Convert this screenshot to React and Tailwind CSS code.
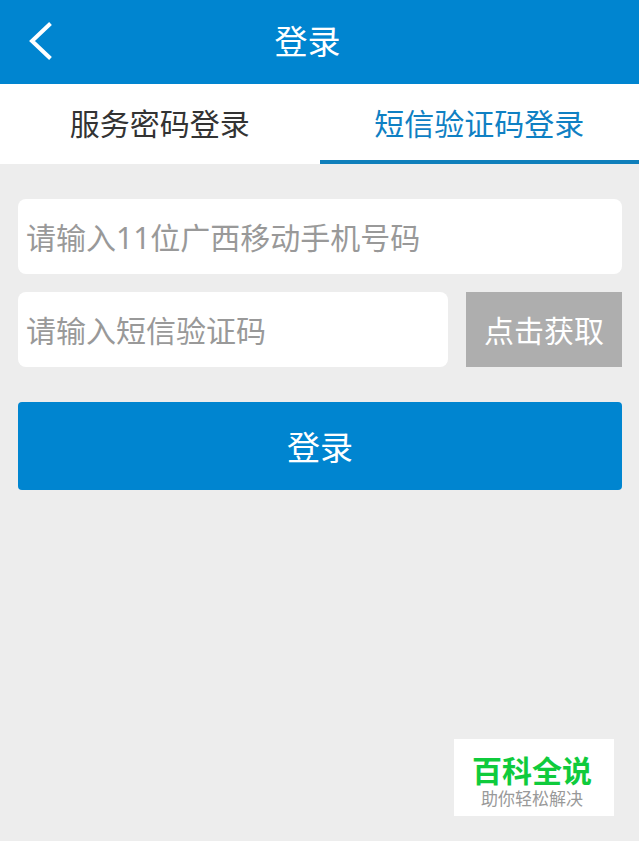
import { useState } from "react";

const TABS = [
  { id: "password", label: "服务密码登录" },
  { id: "sms", label: "短信验证码登录" },
];

const Header = () => (
  <header className="grid h-[84px] grid-cols-[1fr_auto_1fr] items-center bg-[#0085d0] pb-0.5 pr-6 text-white">
    <button type="button" aria-label="返回" className="justify-self-start py-5 pl-7 pr-6">
      <svg width="26" height="42" viewBox="0 0 26 42" fill="none" stroke="currentColor" strokeWidth="4">
        <path d="M22.5 3.5 4 21 22.5 38.5" />
      </svg>
    </button>
    <h1 className="pt-0.5 text-[33px] leading-10">登录</h1>
  </header>
);

const Tabs = ({ active, onChange }) => (
  <nav role="tablist" className="grid h-20 grid-cols-2 bg-white">
    {TABS.map((tab) => (
      <button
        key={tab.id}
        type="button"
        role="tab"
        aria-selected={active === tab.id}
        onClick={() => onChange(tab.id)}
        className={`border-b-4 pt-1 text-[30px] leading-10 ${
          active === tab.id
            ? "border-[#0f7fbb] text-[#0f80c3]"
            : "border-transparent text-[#333333]"
        }`}
      >
        {tab.label}
      </button>
    ))}
  </nav>
);

const Field = ({ label, ...props }) => (
  <input
    aria-label={label}
    placeholder={label}
    className="h-[75px] w-full min-w-0 flex-1 rounded-lg bg-white px-2 pt-0.5 text-[30px] text-[#333333] outline-none placeholder:text-[#999999]"
    {...props}
  />
);

const App = () => {
  const [active, setActive] = useState("sms");

  return (
    <div className="flex min-h-screen flex-col bg-[#ededed] font-['Noto_Sans','Noto_Sans_CJK_SC',sans-serif]">
      <Header />
      <Tabs active={active} onChange={setActive} />
      <form className="flex flex-col pl-[18px] pr-[17px] pt-[35px]" onSubmit={(e) => e.preventDefault()}>
        <div className="flex">
          <Field label="请输入11位广西移动手机号码" type="tel" />
        </div>
        <div className="mt-[18px] flex gap-[18px]">
          <Field label="请输入短信验证码" type="text" inputMode="numeric" />
          <button type="button" className="bg-[#aeaeae] px-[18px] pt-0.5 text-[30px] text-white">
            点击获取
          </button>
        </div>
        <button
          type="submit"
          className="mt-[35px] h-[88px] rounded bg-[#0085d0] pt-1 text-[33px] leading-10 text-white"
        >
          登录
        </button>
      </form>
      <aside className="mb-[25px] mr-[25px] mt-auto flex h-[77px] w-40 flex-col items-center justify-center self-end bg-white pr-1 pt-[10px]">
        <p className="text-[30px] font-bold leading-8 text-[#0fcb3c]">百科全说</p>
        <p className="text-[17px] leading-6 text-[#999999]">助你轻松解决</p>
      </aside>
    </div>
  );
};

export default App;
